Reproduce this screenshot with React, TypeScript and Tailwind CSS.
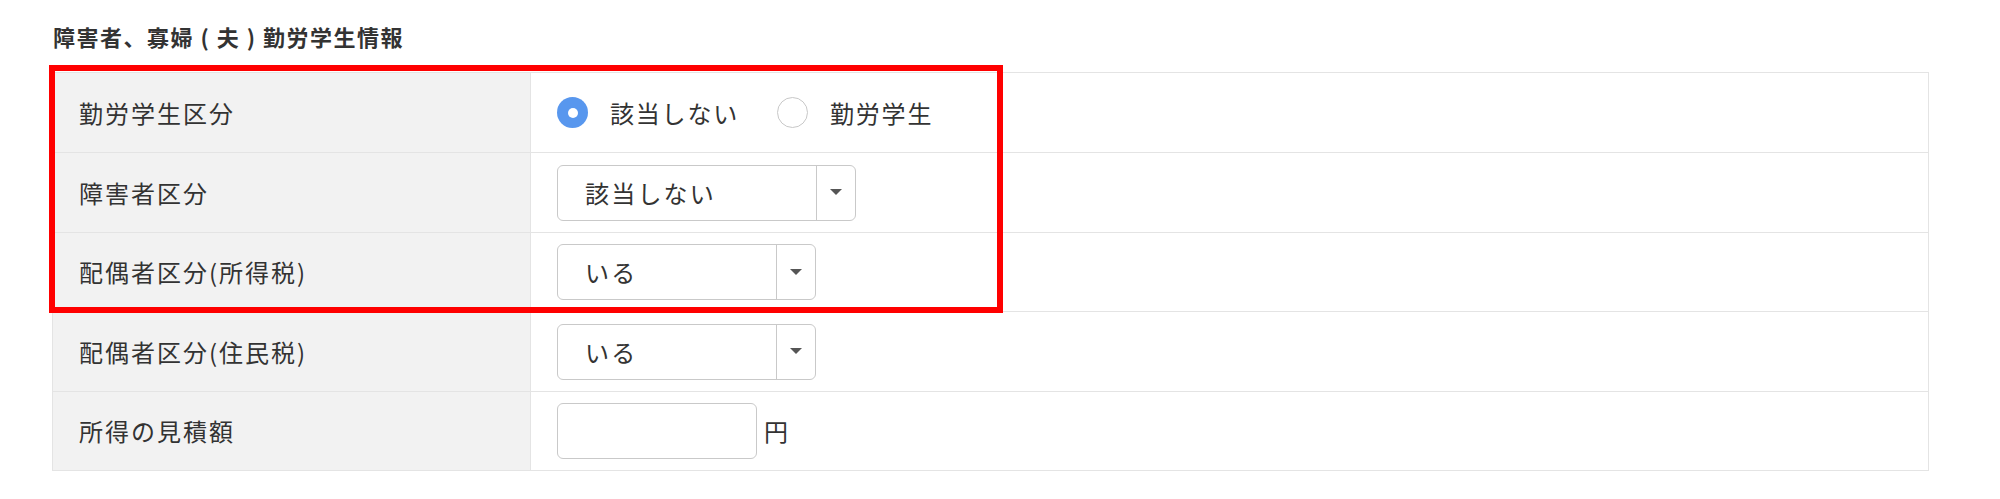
const font = { fontFamily: '"Noto Sans CJK JP", "Noto Sans", sans-serif' };

const Caret = () => (
    <svg width="12" height="7" viewBox="0 0 12 7" className="block">
        <path d="M0 0 L12 0 L6 6 Z" fill="#555" />
    </svg>
);

const Select = ({ value, width }: { value: string; width: string }) => (
    <div className={`flex h-[56px] ${width} rounded-[6px] border border-[#c9c9c9] bg-white`}>
        <div className="flex flex-1 items-center pl-[27px] text-[24px] tracking-[2.2px] text-[#333]">
            {value}
        </div>
        <div className="flex w-[39px] items-center justify-center border-l border-[#c9c9c9]">
            <Caret />
        </div>
    </div>
);

const Radio = ({ checked, label }: { checked?: boolean; label: string }) => (
    <label className="flex items-center">
        {checked ? (
            <span className="flex h-[31px] w-[31px] items-center justify-center rounded-full bg-[#5897ee]">
                <span className="h-[10px] w-[10px] rounded-full bg-white" />
            </span>
        ) : (
            <span className="h-[31px] w-[31px] rounded-full border border-[#c8c8c8] bg-white" />
        )}
        <span className="ml-[22px] text-[24px] tracking-[1.8px] text-[#333]">{label}</span>
    </label>
);

const Row = ({
    label,
    height,
    last,
    children,
}: {
    label: string;
    height: string;
    last?: boolean;
    children: React.ReactNode;
}) => (
    <div className={`flex ${height} ${last ? '' : 'border-b border-[#e4e4e4]'}`}>
        <div className="flex w-[478px] items-center border-r border-[#e4e4e4] bg-[#f2f2f2] pl-[26px] text-[24px] tracking-[2px] text-[#333]">
            {label}
        </div>
        <div className="flex flex-1 items-center pl-[26px]">{children}</div>
    </div>
);

export default function App() {
    return (
        <div className="h-[499px] w-[2000px] bg-white pl-[52px] pt-[22px]" style={font}>
            <h2 className="h-[50px] pl-[1px] text-[22px] font-bold leading-[28px] tracking-[1.5px] text-[#333]">
                障害者、寡婦 ( 夫 ) 勤労学生情報
            </h2>

            <div className="relative w-[1877px] border border-[#e4e4e4]">
                {/* Rows */}
                <Row label="勤労学生区分" height="h-[80px]">
                    <div className="flex items-center gap-[38px]">
                        <Radio checked label="該当しない" />
                        <Radio label="勤労学生" />
                    </div>
                </Row>
                <Row label="障害者区分" height="h-[80px]">
                    <Select value="該当しない" width="w-[299px]" />
                </Row>
                <Row label="配偶者区分(所得税)" height="h-[79px]">
                    <Select value="いる" width="w-[259px]" />
                </Row>
                <Row label="配偶者区分(住民税)" height="h-[80px]">
                    <Select value="いる" width="w-[259px]" />
                </Row>
                <Row label="所得の見積額" height="h-[78px]" last>
                    <div className="flex items-center">
                        <input
                            type="text"
                            className="h-[56px] w-[200px] rounded-[6px] border border-[#c9c9c9] bg-white px-3 text-[24px] outline-none"
                        />
                        <span className="ml-[7px] text-[24px] text-[#333]">円</span>
                    </div>
                </Row>

                {/* Highlight frame */}
                <div className="pointer-events-none absolute left-[-4px] top-[-8px] h-[248px] w-[954px] border-[6px] border-[#ff0000]" />
            </div>
        </div>
    );
}
